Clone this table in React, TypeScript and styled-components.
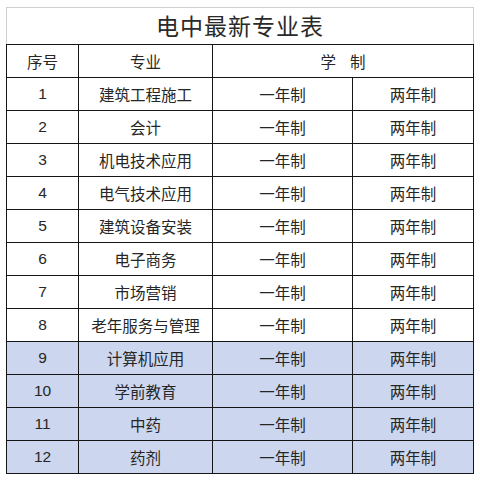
import styled, { createGlobalStyle } from 'styled-components'

const GlobalStyle = createGlobalStyle`
  body {
    margin: 0;
    background: #ffffff;
    font-family: "Noto Sans CJK SC", "Noto Sans", sans-serif;
  }
`

const majors = [
  '建筑工程施工',
  '会计',
  '机电技术应用',
  '电气技术应用',
  '建筑设备安装',
  '电子商务',
  '市场营销',
  '老年服务与管理',
  '计算机应用',
  '学前教育',
  '中药',
  '药剂',
]

const App = () => {
  return (
    <>
      <GlobalStyle />
      <Page>
        <Title>电中最新专业表</Title>
        <Table>
          <colgroup>
            <col style={{ width: 72 }} />
            <col style={{ width: 134 }} />
            <col style={{ width: 140 }} />
            <col style={{ width: 121 }} />
          </colgroup>
          <tbody>
            <Row>
              <Cell>序号</Cell>
              <Cell>专业</Cell>
              <Cell colSpan={2}>学&nbsp;&nbsp;&nbsp;&nbsp;制</Cell>
            </Row>
            {majors.map((name, i) => (
              <Row key={name} $shaded={i >= 8}>
                <Cell $num>{i + 1}</Cell>
                <Cell>{name}</Cell>
                <Cell>一年制</Cell>
                <Cell>两年制</Cell>
              </Row>
            ))}
          </tbody>
        </Table>
      </Page>
    </>
  )
}

export default App

const Page = styled.div`
  width: 468px;
  padding: 7px 0 0 6px;
`

const Title = styled.div`
  height: 37px;
  border: 1px solid #cfcfcf;
  border-bottom: none;
  display: flex;
  align-items: center;
  justify-content: center;
  font-size: 23px;
  letter-spacing: 1px;
  color: #2a2a2a;
  padding-bottom: 2px;
  box-sizing: border-box;
`

const Table = styled.table`
  width: 468px;
  table-layout: fixed;
  border-collapse: collapse;
  border: 1px solid #151515;
`

const Row = styled.tr<{ $shaded?: boolean }>`
  height: 33px;
  background: ${({ $shaded }) => ($shaded ? '#ccd6ee' : '#ffffff')};
`

const Cell = styled.td<{ $num?: boolean }>`
  border: 1px solid #151515;
  padding: 0 0 1px;
  text-align: center;
  vertical-align: middle;
  font-size: 15.5px;
  color: #262626;
  font-family: ${({ $num }) =>
    $num ? '"Liberation Sans", sans-serif' : '"Noto Sans CJK SC", sans-serif'};
`
